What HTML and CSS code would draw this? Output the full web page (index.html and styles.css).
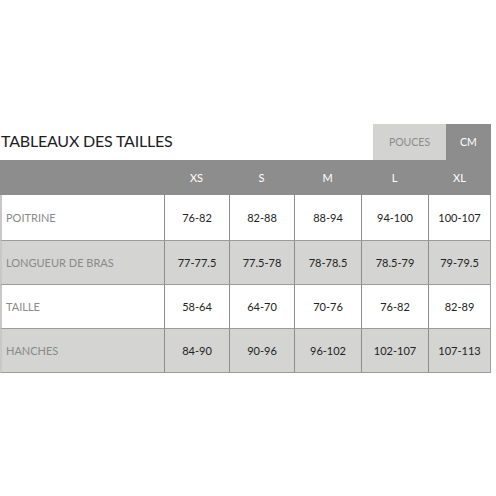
FILE: index.html
```html
<!DOCTYPE html>
<html>
<head>
<meta charset="utf-8">
<link rel="stylesheet" href="styles.css">
</head>
<body>
<div class="chart">
  <div class="top">
    <h1 class="title">TABLEAUX DES TAILLES</h1>
    <div class="tabs">
      <div class="tab tab-off">POUCES</div>
      <div class="tab tab-on">CM</div>
    </div>
  </div>
  <div class="grid">
    <div class="hd"></div><div class="hd">XS</div><div class="hd">S</div><div class="hd">M</div><div class="hd">L</div><div class="hd">XL</div>

    <div class="lbl">POITRINE</div><div class="val">76-82</div><div class="val">82-88</div><div class="val">88-94</div><div class="val">94-100</div><div class="val last">100-107</div>

    <div class="lbl alt">LONGUEUR DE BRAS</div><div class="val alt">77-77.5</div><div class="val alt">77.5-78</div><div class="val alt">78-78.5</div><div class="val alt">78.5-79</div><div class="val alt last">79-79.5</div>

    <div class="lbl">TAILLE</div><div class="val">58-64</div><div class="val">64-70</div><div class="val">70-76</div><div class="val">76-82</div><div class="val last">82-89</div>

    <div class="lbl alt">HANCHES</div><div class="val alt">84-90</div><div class="val alt">90-96</div><div class="val alt">96-102</div><div class="val alt">102-107</div><div class="val alt last">107-113</div>
  </div>
</div>
</body>
</html>
```

FILE: styles.css
```css
html, body {
  margin: 0;
  padding: 0;
  background: #ffffff;
}
body {
  font-family: "Lato", "Open Sans", sans-serif;
}
.chart {
  width: 492px;
  padding-top: 124px;
}
.top {
  display: flex;
  justify-content: space-between;
  align-items: stretch;
  height: 36px;
}
.title {
  margin: 0;
  padding: 7px 0 0 1px;
  font-size: 16px;
  font-weight: 400;
  color: #1e1e1e;
  letter-spacing: -0.2px;
}
.tabs {
  display: flex;
}
.tab {
  display: flex;
  align-items: center;
  justify-content: center;
  font-size: 10.5px;
  padding-bottom: 0;
}
.tab-off {
  width: 73px;
  background: #d3d3d1;
  color: #8c8c8c;
}
.tab-on {
  width: 45px;
  background: #8d8d8d;
  color: #ffffff;
  margin-right: 1px;
}
.grid {
  display: grid;
  grid-template-columns: 164px 65px 65px 67px 67px 63px;
  grid-template-rows: 35px 46px 44px 44px 44px;
  width: 491px;
}
.hd {
  background: #8d8d8d;
  color: #ffffff;
  font-size: 11px;
  display: flex;
  align-items: center;
  justify-content: center;
}
.lbl, .val {
  display: flex;
  align-items: center;
  font-size: 11px;
  border-bottom: 1px solid #9c9c9c;
  border-left: 1px solid #8e8e8e;
  background: #ffffff;
}
.lbl {
  color: #8a8a8a;
  padding-left: 4px;
  border-left: 2px solid #c8c8c8;
}
.val {
  justify-content: center;
  color: #222222;
}
.last {
  border-right: 1px solid #a0a0a0;
}
.alt {
  background: #d4d4d2;
}
```
